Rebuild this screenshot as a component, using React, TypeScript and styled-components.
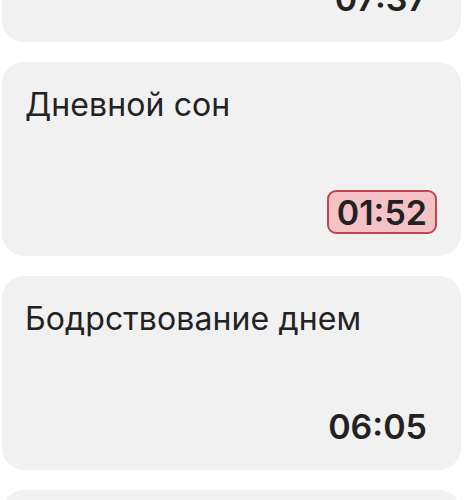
import React from 'react';
import styled, { createGlobalStyle } from 'styled-components';

const GlobalStyle = createGlobalStyle`
	html, body {
		margin: 0;
		padding: 0;
		background: #ffffff;
		overflow: hidden;
	}
	body {
		font-family: Inter, "Noto Sans", "Liberation Sans", sans-serif;
		-webkit-font-smoothing: antialiased;
	}
`;

const List = styled.div`
	display: flex;
	flex-direction: column;
	gap: 20px;
	width: 459px;
	margin-top: -152px;
	margin-left: 2px;
`;

const Card = styled.div`
	display: flex;
	flex-direction: column;
	justify-content: space-between;
	height: 194px;
	box-sizing: border-box;
	padding: 23px 24px 22px 23px;
	background: #f1f1f1;
	border-radius: 22px;
`;

const Title = styled.div`
	font-size: 32px;
	font-weight: 400;
	color: #222222;
	line-height: 40px;
	letter-spacing: 0.1px;
`;

const TimeRow = styled.div`
	display: flex;
	justify-content: flex-end;
`;

const Time = styled.div<{ $alert?: boolean }>`
	box-sizing: border-box;
	height: 44px;
	padding: 0 8px;
	display: flex;
	align-items: center;
	font-size: 34px;
	font-weight: 600;
	color: #222222;
	border-radius: 9px;
	border: 2px solid ${p => (p.$alert ? '#c2454d' : 'transparent')};
	background: ${p => (p.$alert ? '#f5c3c6' : 'transparent')};
`;

const items = [
	{ title: 'Ночной сон', time: '07:37', alert: false },
	{ title: 'Дневной сон', time: '01:52', alert: true },
	{ title: 'Бодрствование днем', time: '06:05', alert: false },
	{ title: 'Бодрствование ночью', time: '00:00', alert: false },
];

export default function App() {
	return (
		<>
			<GlobalStyle />
			<List>
				{items.map(item => (
					<Card key={item.title}>
						<Title>{item.title}</Title>
						<TimeRow>
							<Time $alert={item.alert}>{item.time}</Time>
						</TimeRow>
					</Card>
				))}
			</List>
		</>
	);
}
